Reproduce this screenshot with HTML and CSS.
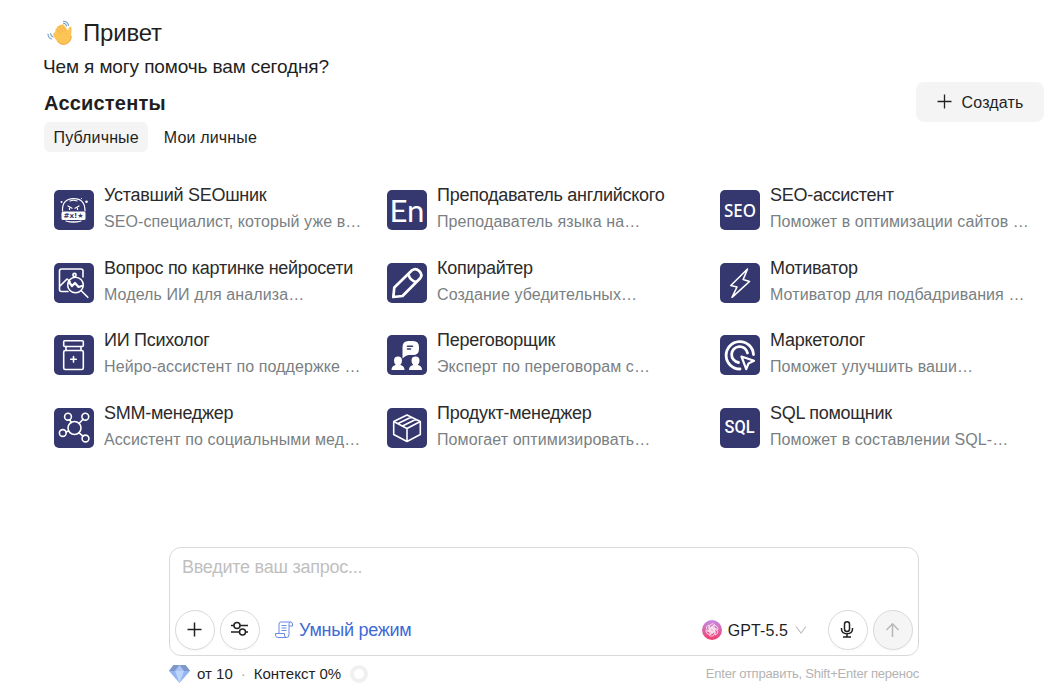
FILE: index.html
```html
<!DOCTYPE html>
<html lang="ru">
<head>
	<meta charset="utf-8">
	<title>Ассистенты</title>
	<link rel="stylesheet" href="styles.css">
</head>
<body>
	<!-- Greeting -->
	<header class="greeting">
		<h1 class="hello">
			<svg class="wave" width="26" height="26" viewBox="0 0 26 26">
				<path d="M8.2 12 L6.3 13.6 Q5.4 16 10.4 21.5 Q15 26 20 23.6 Q24.8 21 24.2 15 L24.6 8 Q23.6 5.4 22.1 7.400 L21 10.4 L17.400 5.4 Q15.8 3.4 14.9 5 Q12.6 4 12 6 Q9.600 6 9.8 8.3 Q7.800 9 8.2 12Z" fill="#fcc455"/>
				<path d="M12 6.6 L15.8 11.6 M14.7 5.4 L18 10 M9.900 9 L13.6 13.4" fill="none" stroke="#efab48" stroke-width=".7" stroke-linecap="round"/>
				<path d="M10.4 21.5 Q15 26 20 23.6 Q24.2 21.4 24.2 16" fill="none" stroke="#f2a548" stroke-width="1"/>
				<path d="M16.500 1.2 Q20.600 1.2 21.5 5.4 M16.500 3.2 Q18.900 3.200 19.4 6 M1 14 Q1.2 18 4.6 19 M3.6 13.6 Q3.6 16 6 17" fill="none" stroke="#6f9dc4" stroke-width="1.1" stroke-linecap="round"/>
			</svg>
			<span>Привет</span>
		</h1>
		<p class="question">Чем я могу помочь вам сегодня?</p>
	</header>

	<!-- Assistants -->
	<section class="assistants">
		<div class="assistants-head">
			<div>
				<h2 class="section-title">Ассистенты</h2>
				<div class="tabs">
					<button class="tab tab-active">Публичные</button>
					<button class="tab">Мои личные</button>
				</div>
			</div>
			<button class="create-btn">
				<svg width="16" height="16" viewBox="0 0 16 16"><path d="M7.5 .5v14M.5 7.5h14" stroke="#222" stroke-width="1.3"/></svg>
				<span>Создать</span>
			</button>
		</div>

		<div class="grid">
			<div class="card">
				<svg class="icon" viewBox="0 0 40 40">
					<path class="thin" d="M8.5 21Q8 9 19.5 8.7T31 21M16 11q3.5-1.5 7 0M14 16l4 2.2M25 16l-4 2.2M12 31q7.5 2.5 15 0M14 31.5q5.5.8 11 0"/>
					<path class="thin" d="M15.5 18v1.5M23.5 18v1.5"/>
					<rect x="7.5" y="21.5" width="24" height="8.5" rx="1.5" class="solid"/>
					<circle cx="7.5" cy="12" r="1" class="solid"/>
					<circle cx="32.5" cy="11.8" r="1.3" class="solid"/>
					<circle cx="27.5" cy="8.5" r=".6" class="solid"/>
					<text x="9.5" y="28.3" class="swear" textLength="20" lengthAdjust="spacingAndGlyphs">#x!★</text>
				</svg>
				<div class="card-text">
					<div class="name">Уставший SEOшник</div>
					<div class="desc">SEO-специалист, который уже в…</div>
				</div>
			</div>
			<div class="card">
				<svg class="icon" viewBox="0 0 40 40"><text x="2.5" y="32" class="en" textLength="35" lengthAdjust="spacingAndGlyphs">En</text></svg>
				<div class="card-text">
					<div class="name">Преподаватель английского</div>
					<div class="desc">Преподаватель языка на…</div>
				</div>
			</div>
			<div class="card">
				<svg class="icon" viewBox="0 0 40 40"><text x="4" y="27" class="seo" textLength="32" lengthAdjust="spacingAndGlyphs">SEO</text></svg>
				<div class="card-text">
					<div class="name">SEO-ассистент</div>
					<div class="desc">Поможет в оптимизации сайтов …</div>
				</div>
			</div>

			<div class="card">
				<svg class="icon" viewBox="0 0 40 40">
					<path d="M14 28.5H7.5q-2 0-2-2V8q0-2 2-2H27q2 0 2 2v6M6 23l7-7 3 2.5"/>
					<circle cx="20.5" cy="12" r="1.6"/>
					<circle cx="21.5" cy="22" r="7.8"/>
					<path d="M27 27.5l6.800 6.8"/>
					<path class="bold" d="M15 19l3 4 3-3 3.5 4 3.5-1"/>
				</svg>
				<div class="card-text">
					<div class="name">Вопрос по картинке нейросети</div>
					<div class="desc">Модель ИИ для анализа…</div>
				</div>
			</div>
			<div class="card">
				<svg class="icon" viewBox="0 0 40 40">
					<path class="pencil" d="M6.3 34l1-9.5L25 7.3q3.5-2.8 7.2.7 3.7 3.8 1 7.2L15.5 33zM21.500 11.5q1.5 6.3 8 7.500"/>
				</svg>
				<div class="card-text">
					<div class="name">Копирайтер</div>
					<div class="desc">Создание убедительных…</div>
				</div>
			</div>
			<div class="card">
				<svg class="icon" viewBox="0 0 40 40"><path d="M27.5 6L10.8 22.5l6.2 1.5-5 10.3L29.5 18.5l-6.3-2z"/></svg>
				<div class="card-text">
					<div class="name">Мотиватор</div>
					<div class="desc">Мотиватор для подбадривания …</div>
				</div>
			</div>

			<div class="card">
				<svg class="icon" viewBox="0 0 40 40">
					<rect x="9.7" y="5.7" width="19.6" height="5.8" rx="1"/>
					<path d="M12 11.5v4M27 11.5v4"/>
					<rect x="9.7" y="15.5" width="19.6" height="19" rx="1.5"/>
					<path d="M19.5 21.5v5.6M16.700 24.3h5.6"/>
				</svg>
				<div class="card-text">
					<div class="name">ИИ Психолог</div>
					<div class="desc">Нейро-ассистент по поддержке …</div>
				</div>
			</div>
			<div class="card">
				<svg class="icon" viewBox="0 0 40 40">
					<path class="solid" d="M15.5 23.5V12q0-6 6-6H26q6 0 6 6v2q0 6-6 6h-4q-3 0-6.5 3.5z"/>
					<g class="solid">
						<path d="M7 25.500q0-4 4-4t4 4q0 3-1.500 4v.5q4 1 4 5h-13q0-4 4-5v-.5q-1.500-1-1.500-4z"/>
						<path d="M24.500 25.500q0-4 4-4t4 4q0 3-1.500 4v.5q4 1 4 5H22q0-4 4-5v-.5q-1.500-1-1.500-4z"/>
					</g>
					<path class="cut" d="M20.5 11.3h5M20.5 14h3"/>
				</svg>
				<div class="card-text">
					<div class="name">Переговорщик</div>
					<div class="desc">Эксперт по переговорам с…</div>
				</div>
			</div>
			<div class="card">
				<svg class="icon" viewBox="0 0 40 40">
					<path class="heavy" d="M33.5 19.5A13.7 13.7 0 1 0 20 34M27.5 18A8 8 0 1 0 18.5 27.5"/>
					<path class="bold" d="M21.5 21.5l12.5 4.3-5.5 2.7-2.3 5.7z"/>
				</svg>
				<div class="card-text">
					<div class="name">Маркетолог</div>
					<div class="desc">Поможет улучшить ваши…</div>
				</div>
			</div>

			<div class="card">
				<svg class="icon" viewBox="0 0 40 40">
					<circle cx="20.5" cy="20" r="6.5"/>
					<circle cx="14" cy="8.7" r="3.4"/><circle cx="31.3" cy="8.7" r="3.4"/>
					<circle cx="8.8" cy="25" r="3.4"/><circle cx="31.5" cy="30.5" r="3.4"/>
					<path d="M15.5 11.7l2 2.8M29 11.2l-4 4.3M12 24l2.5-1M25 24.8l4 3.4"/>
				</svg>
				<div class="card-text">
					<div class="name">SMM-менеджер</div>
					<div class="desc">Ассистент по социальными мед…</div>
				</div>
			</div>
			<div class="card">
				<svg class="icon" viewBox="0 0 40 40">
					<path d="M20 7l13.3 6.5v13L20 33.5l-13.3-7v-13zM6.7 13.5L20 20.5l13.3-7M20 20.5v13M11 15.5L24.5 9M15.5 18L29 11.3"/>
				</svg>
				<div class="card-text">
					<div class="name">Продукт-менеджер</div>
					<div class="desc">Помогает оптимизировать…</div>
				</div>
			</div>
			<div class="card">
				<svg class="icon" viewBox="0 0 40 40"><text x="4.5" y="24.5" class="sql" textLength="30" lengthAdjust="spacingAndGlyphs">SQL</text></svg>
				<div class="card-text">
					<div class="name">SQL помощник</div>
					<div class="desc">Поможет в составлении SQL-…</div>
				</div>
			</div>
		</div>
	</section>

	<!-- Prompt form -->
	<form class="composer">
		<textarea class="prompt" placeholder="Введите ваш запрос..."></textarea>
		<div class="toolbar">
			<button type="button" class="round-btn">
				<svg width="18" height="18" viewBox="0 0 18 18"><path d="M8.5 1.5v14M1.5 8.5h14" stroke="#222" stroke-width="1.5"/></svg>
			</button>
			<button type="button" class="round-btn">
				<svg width="20" height="20" viewBox="0 0 20 20" fill="none" stroke="#222" stroke-width="1.5">
					<circle cx="7" cy="5.5" r="3"/><circle cx="12.5" cy="12" r="3"/><path d="M1 5.5h3M10 5.5h8M1 12h8.5M15.5 12H18"/>
				</svg>
			</button>
			<div class="mode">
				<svg width="18" height="18" viewBox="0 0 18 18" fill="none" stroke="#6b8be0" stroke-width="1">
					<path d="M4 12V3q0-2 2-2h9.5Q14 1 14 3v11q0 2.5-2.5 2.5H3Q.5 16.5.5 14v-1.500h9V14q0 2.5 2 2.5M15.5 1q2 0 2 2v2H14M6.5 4.5h5M6.5 7h5M6.5 9.5h5"/>
				</svg>
				<span>Умный режим</span>
			</div>
			<div class="model">
				<svg width="20" height="20" viewBox="0 0 20 20">
					<defs><linearGradient id="pink" x2="0" y2="1"><stop offset="0" stop-color="#c48be6"/><stop offset="1" stop-color="#f33c6c"/></linearGradient></defs>
					<circle cx="10" cy="10" r="10" fill="url(#pink)"/>
					<g fill="none" stroke="#fff" stroke-width=".8" stroke-opacity=".9">
						<path id="petal" d="M7.6 11.3V6.5q0-2.7 2.7-2.7 1.5 0 2.4 1L8.9 7v4.2"/>
						<use href="#petal" transform="rotate(60 10 10)"/><use href="#petal" transform="rotate(120 10 10)"/>
						<use href="#petal" transform="rotate(180 10 10)"/><use href="#petal" transform="rotate(240 10 10)"/>
						<use href="#petal" transform="rotate(300 10 10)"/>
					</g>
				</svg>
				<span>GPT-5.5</span>
				<svg class="chevron" width="12" height="10" viewBox="0 0 12 10"><path d="M1 1.5L6 8l5-6.5" fill="none" stroke="#bfbfbf" stroke-width="1.1"/></svg>
			</div>
			<button type="button" class="round-btn">
				<svg width="18" height="18" viewBox="0 0 18 18" fill="none" stroke="#222" stroke-width="1.5">
					<rect x="5.5" y=".8" width="5" height="9.7" rx="2.5"/><path d="M2.5 7v1q0 4.7 5.5 4.7T13.5 8V7M8 12.7V16M4 16h8"/>
				</svg>
			</button>
			<button type="button" class="round-btn send-btn">
				<svg width="18" height="18" viewBox="0 0 18 18"><path d="M8.5 16V3M2.5 9l6-6.2 6 6.2" fill="none" stroke="#b8b8b8" stroke-width="1.5"/></svg>
			</button>
		</div>
	</form>
	<div class="status">
		<svg width="21" height="18" viewBox="0 0 21 18">
			<path d="M4.5 0h12L21 6 10.5 18 0 6z" fill="#92b4f2"/>
			<path d="M4.5 0h12L21 6H0z" fill="#7e98c8"/>
			<path d="M10.5 0L6 6h9z" fill="#a9c4f5"/>
			<path d="M6 6h9l-4.5 12z" fill="#bcd5fb"/>
		</svg>
		<span class="cost">от 10</span>
		<span class="dot">·</span>
		<span class="context">Контекст 0%</span>
		<span class="ring"></span>
		<span class="hint">Enter отправить, Shift+Enter перенос</span>
	</div>
</body>
</html>
```
FILE: styles.css
```css
* {
	box-sizing: border-box;
}
body {
	margin: 0;
	height: 693px;
	overflow: hidden;
	background: #fff;
	color: #1f1f1f;
	font-family: "Liberation Sans", Arial, sans-serif;
	font-size: 16px;
}
button {
	font: inherit;
	color: inherit;
	border: none;
	cursor: pointer;
}
svg {
	display: block;
	flex: none;
}
/* Greeting */
.greeting {
	padding: 16px 43px 0;
}
.hello {
	display: flex;
	align-items: center;
	gap: 10px;
	height: 34px;
	margin: 0;
	padding-left: 4px;
	font-size: 24px;
	font-weight: normal;
	letter-spacing: -.2px;
}
.question {
	margin: 4px 0 0;
	font-size: 19px;
	line-height: 26px;
	letter-spacing: -.12px;
}
/* Assistants */
.assistants-head {
	display: flex;
	justify-content: space-between;
	align-items: flex-start;
	height: 94px;
	padding: 2px 10px 0 44px;
}
.section-title {
	margin: 9px 0 6px;
	font-size: 20px;
	line-height: 25px;
	letter-spacing: .2px;
}
.tabs {
	display: flex;
	gap: 6px;
}
.tab {
	height: 30px;
	padding: 1px 9.5px 0;
	border-radius: 6px;
	background: none;
	letter-spacing: .15px;
}
.tab-active {
	background: #f4f4f4;
}
.create-btn {
	display: flex;
	align-items: center;
	justify-content: center;
	gap: 9px;
	width: 128px;
	height: 40px;
	border-radius: 8px;
	background: #f4f4f4;
	letter-spacing: .15px;
}
.create-btn span {
	padding-top: 1px;
}
/* Cards */
.grid {
	display: grid;
	grid-template-columns: repeat(3, 333px);
	grid-auto-rows: 72.67px;
	padding: 8px 0 0 54px;
}
.card {
	display: flex;
	gap: 10px;
}
.icon {
	width: 40px;
	height: 40px;
	margin-top: 8px;
	border-radius: 5px;
	background: #35376f;
	fill: none;
	stroke: #fff;
	stroke-width: 1.6;
	stroke-linejoin: round;
	stroke-linecap: round;
}
.icon text {
	fill: #fff;
	stroke: none;
}
.icon .solid {
	fill: #fff;
	stroke: none;
}
.icon .thin {
	stroke-width: 1.2;
}
.icon .bold {
	stroke-width: 2.2;
}
.icon .pencil {
	stroke-width: 2.7;
}
.icon .heavy {
	stroke-width: 2.8;
}
.icon .cut {
	stroke: #35376f;
}
.icon .swear {
	fill: #35376f;
	font: bold 7px "DejaVu Sans", sans-serif;
	letter-spacing: 0;
}
.en {
	font: 31px Lato, sans-serif;
}
.seo {
	font: 500 18.5px "Noto Sans", sans-serif;
}
.sql {
	font: 500 18px Roboto, sans-serif;
}
.card-text {
	white-space: nowrap;
}
.name {
	color: #2b2b2b;
	font-size: 18px;
	line-height: 26px;
	letter-spacing: -.27px;
}
.desc {
	color: #7a7f83;
	line-height: 27px;
	letter-spacing: .09px;
}
/* Prompt form */
.composer {
	width: 750px;
	height: 109px;
	margin: 74.3px 0 0 169px;
	border: 1px solid #d9d9d9;
	border-radius: 12px;
}
.prompt {
	display: block;
	width: 100%;
	height: 62px;
	padding: 8px 12px;
	border: none;
	outline: none;
	resize: none;
	background: none;
	font: 18px/22px "Liberation Sans", Arial, sans-serif;
	letter-spacing: -.25px;
}
.prompt::placeholder {
	color: #bfbfbf;
}
.toolbar {
	display: flex;
	align-items: center;
	gap: 5px;
	padding: 0 5px;
}
.round-btn {
	display: flex;
	align-items: center;
	justify-content: center;
	width: 40px;
	height: 40px;
	padding: 0;
	border: 1px solid #d9d9d9;
	border-radius: 50%;
	background: #fff;
	box-shadow: 0 2px 0 rgba(0,0,0,0.02);
}
.send-btn {
	background: #f5f5f5;
}
.mode {
	display: flex;
	align-items: center;
	gap: 6px;
	margin-left: 10px;
	color: #4069d6;
	font-size: 18px;
	letter-spacing: -.25px;
}
.mode span {
	padding-top: 1px;
}
.model {
	display: flex;
	align-items: center;
	gap: 6px;
	margin-left: auto;
	margin-right: 16px;
}
.model span {
	padding-top: 2px;
	letter-spacing: .1px;
}
.chevron {
	margin-left: 1px;
}
/* Status line */
.status {
	display: flex;
	align-items: center;
	width: 750px;
	height: 36px;
	margin-left: 169px;
	font-size: 15px;
}
.cost {
	margin-left: 7px;
}
.dot {
	margin: 0 8px;
	color: #aaa;
}
.ring {
	width: 18px;
	height: 18px;
	margin-left: 9px;
	border: 4px solid #f0f0f0;
	border-radius: 50%;
}
.hint {
	margin-left: auto;
	color: #b3b3b3;
	font-size: 13px;
	letter-spacing: -.22px;
}
```
